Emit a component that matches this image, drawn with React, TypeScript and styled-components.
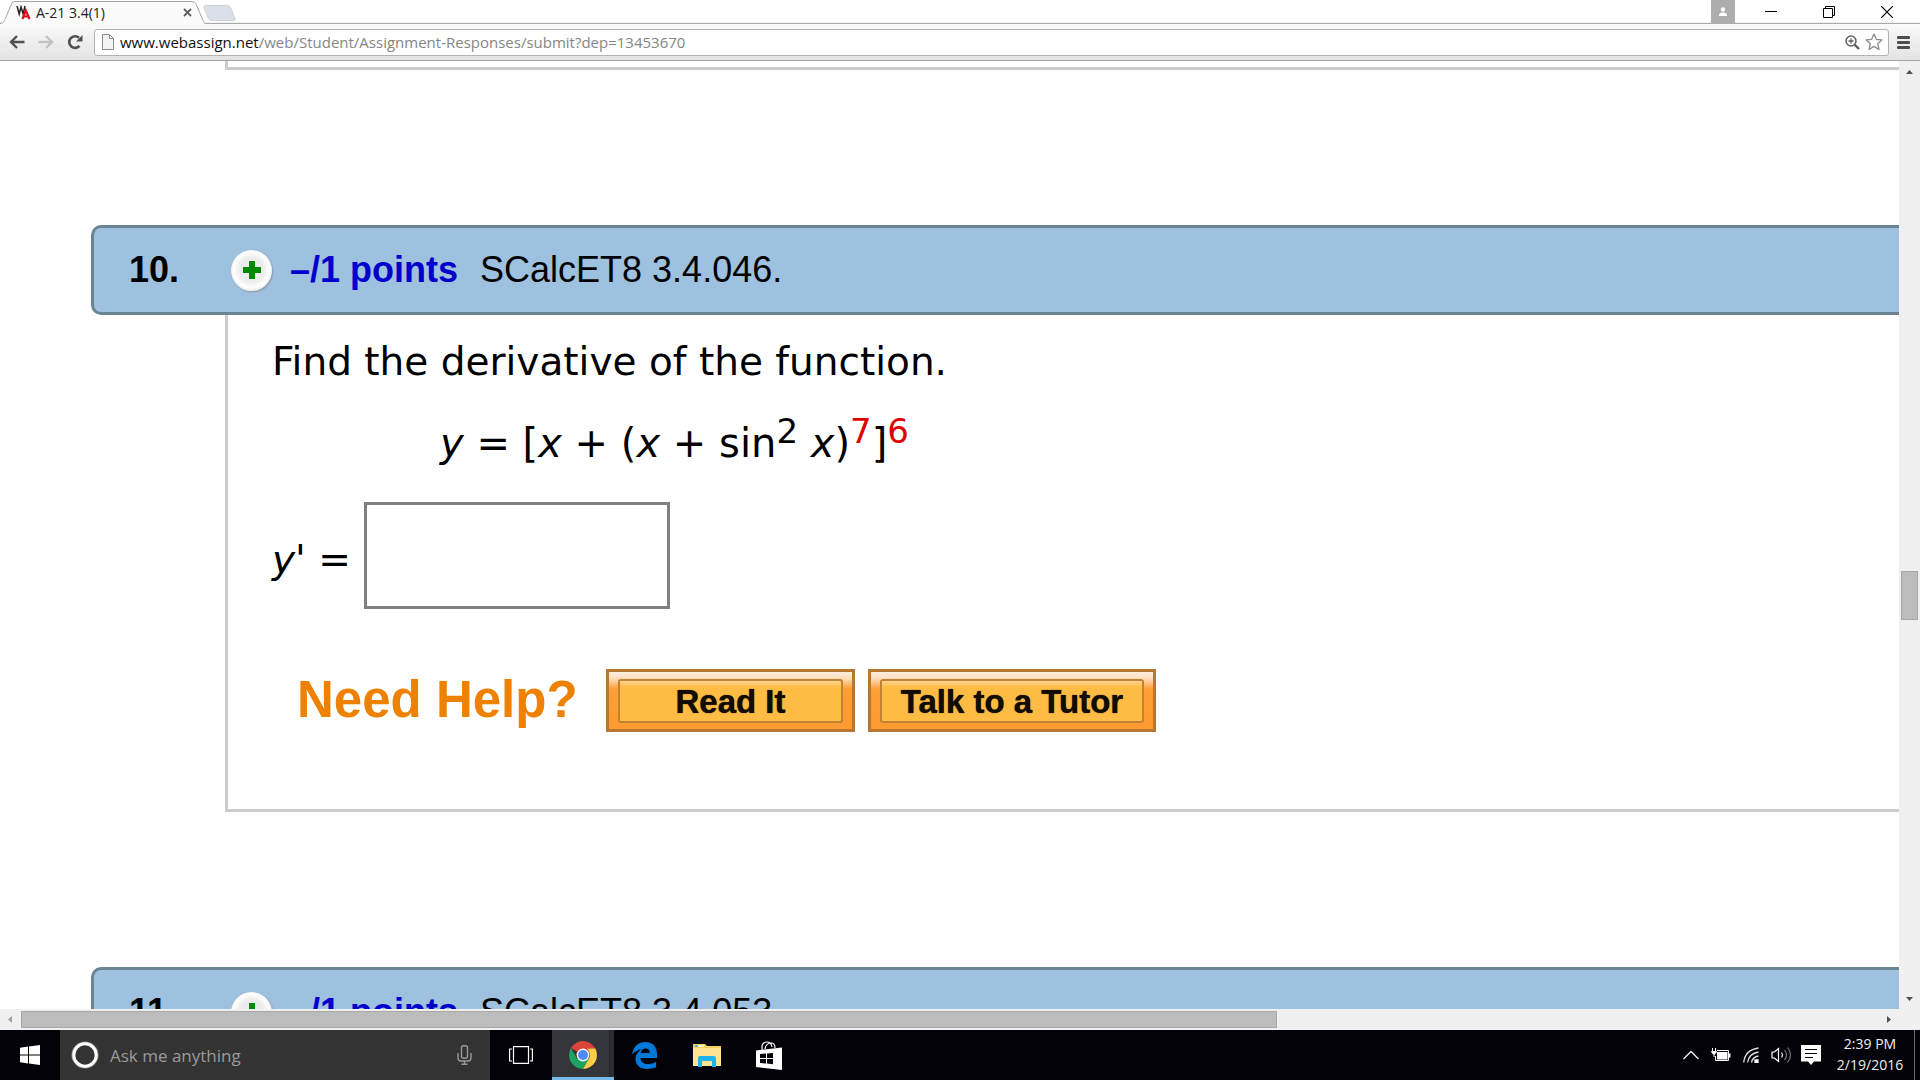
import React from "react";
import styled, { createGlobalStyle } from "styled-components";

const ui = '"Open Sans", "Noto Sans", sans-serif';
const arial = '"Liberation Sans", Arial, sans-serif';
const verdana = 'Verdana, "DejaVu Sans", sans-serif';

const Global = createGlobalStyle`
  * { box-sizing: border-box; }
  html, body { margin: 0; padding: 0; overflow: hidden; }
  button { margin: 0; padding: 0; border: 0; background: none; font: inherit; color: inherit; }
  svg { display: block; flex: none; }
`;

const Screen = styled.div`
  display: flex;
  flex-direction: column;
  height: 100vh;
  background: #fff;
  font-family: ${ui};
`;

/* Browser chrome */
const TabStrip = styled.header`
  display: flex;
  height: 24px;
  background: linear-gradient(#fff 22px, #e4e4e4 23px, #a9a9a9 23px);
`;
const Tab = styled.div`
  display: grid;
  width: 206px;
  height: 24px;
  > * { grid-area: 1 / 1; }
`;
const TabContent = styled.div`
  display: flex;
  align-items: center;
  gap: 5px;
  padding: 1px 14px 0 16px;
  font-size: 14px;
  line-height: 20px;
  color: #222;
`;
const TabTitle = styled.span`
  flex: 1;
  white-space: nowrap;
`;
const NewTab = styled.button`
  align-self: flex-start;
  margin: 5px 0 0 -4px;
`;
const WindowControls = styled.div`
  display: flex;
  margin-left: auto;
  padding-right: 4px;
`;
const Profile = styled.button`
  display: grid;
  place-items: center;
  width: 24px;
  height: 24px;
  margin-right: 7px;
  background: #adadad;
`;
const WindowButton = styled.button`
  display: grid;
  place-items: center;
  width: 58px;
  height: 24px;
`;
const Toolbar = styled.nav`
  display: flex;
  align-items: center;
  height: 37px;
  padding: 0 2px;
  border-bottom: 1px solid #a6a6a6;
  background: linear-gradient(#fafafa, #e3e3e3);
`;
const ToolButton = styled.button`
  display: grid;
  place-items: center;
  width: 29px;
  height: 28px;
`;
const Omnibox = styled.div`
  display: flex;
  align-items: center;
  flex: 1;
  height: 27px;
  margin-left: 5px;
  padding: 0 3px 0 7px;
  border: 1px solid #b3b3b3;
  border-radius: 3px;
  background: #fff;
`;
const Address = styled.div`
  flex: 1;
  margin-left: 6px;
  font-size: 15px;
  line-height: 22px;
  white-space: nowrap;
  color: #858585;
  outline: none;
`;
const Host = styled.span`
  color: #111;
`;
const OmniButton = styled.button`
  display: grid;
  place-items: center;
  width: 22px;
  height: 24px;
`;

/* Viewport with its scroll bars */
const Viewport = styled.div`
  flex: 1;
  min-height: 0;
  display: grid;
  grid-template: minmax(0, 1fr) 21px / minmax(0, 1fr) 21px;
  background: #f0f0f0;
`;
const Page = styled.main`
  overflow: hidden;
  padding-left: 91px;
  background: #fff;
`;
const ScrollBar = styled.div<{ $vertical?: boolean }>`
  display: flex;
  flex-direction: ${(p) => (p.$vertical ? "column" : "row")};
`;
const ScrollArrow = styled.button`
  display: grid;
  place-items: center;
  flex: none;
  width: 21px;
  height: 21px;
`;
const Track = styled.div<{ $vertical?: boolean }>`
  flex: 1;
  display: grid;
  padding: ${(p) => (p.$vertical ? "0 2px" : "2px 0")};
  ${(p) =>
    p.$vertical
      ? "grid-template-rows: 489fr 49fr 368fr;"
      : "grid-template-columns: 0fr 1256fr 601fr;"}
`;
const Thumb = styled.div<{ $vertical?: boolean }>`
  ${(p) => (p.$vertical ? "grid-row: 2;" : "grid-column: 2;")}
  border: 1px solid #a8a8a8;
  background: #bcbcbc;
`;

/* Assignment */
const PreviousBody = styled.div`
  height: 9px;
  margin: 0 0 155px 134px;
  border: solid #ccc;
  border-width: 0 0 3px 3px;
`;
const Question = styled.section`
  margin-bottom: 155px;
`;
const QuestionHeader = styled.h2`
  display: flex;
  align-items: center;
  height: 90px;
  margin: 0;
  padding-left: 35px;
  border: 3px solid #6b8494;
  border-right: 0;
  border-radius: 10px 0 0 10px;
  background: #9dc1df;
  font: 400 36px/42px ${arial};
  color: #000;
  white-space: pre;
`;
const Number = styled.span`
  width: 102px;
  font-weight: 700;
`;
const Expand = styled.button`
  display: grid;
  place-items: center;
  width: 41px;
  height: 41px;
  margin-right: 18px;
  border-radius: 50%;
  background: radial-gradient(circle at 50% 48%, #ececec 40%, #fff 62%, #f1f1f1 68%);
  box-shadow: 1px 1px 2px #8796a2;
`;
const Points = styled.a`
  margin-right: 22px;
  font-weight: 700;
  color: #0000cd;
  text-decoration: none;
`;
const QuestionBody = styled.div`
  height: 497px;
  margin-left: 134px;
  padding: 24px 0 0 44px;
  border: solid #ccc;
  border-width: 0 0 3px 3px;
  font: 400 39px/46px ${verdana};
  color: #000;
`;
const Prompt = styled.p`
  margin: 0 0 35px;
  white-space: nowrap;
`;
const Equation = styled.p`
  margin: 0 0 36px;
  padding-left: 168px;
  font-size: 40px;
  white-space: nowrap;
`;
const Sup = styled.sup<{ $red?: boolean }>`
  font-size: 34px;
  line-height: 0;
  vertical-align: 14px;
  color: ${(p) => (p.$red ? "#e00000" : "inherit")};
`;
const AnswerRow = styled.div`
  display: flex;
  align-items: center;
  gap: 16px;
  margin-bottom: 60px;
`;
const AnswerLabel = styled.label`
  width: 76px;
  padding-top: 8px;
  white-space: nowrap;
`;
const AnswerInput = styled.input`
  width: 306px;
  height: 107px;
  padding: 0 12px;
  border: 3px solid #808080;
  border-radius: 0;
  background: #fff;
  font: inherit;
  outline: none;
`;
const HelpRow = styled.div`
  display: flex;
  align-items: center;
  gap: 13px;
  padding-left: 25px;
  font-family: ${arial};
  font-weight: 700;
`;
const HelpTitle = styled.strong`
  width: 296px;
  padding-bottom: 2px;
  font-size: 51px;
  line-height: 60px;
  color: #ee8100;
  white-space: nowrap;
`;
const HelpButton = styled.button<{ $wide?: boolean }>`
  width: ${(p) => (p.$wide ? 288 : 249)}px;
  height: 63px;
  padding: 0 9px;
  border: 3px solid #b87730;
  background: linear-gradient(#ffeedd, #ffdfc0 6px, #ff9f35 17px, #ff9b30);
  font-size: 33px;
  line-height: 36px;
  color: #120d00;
  text-shadow: 0 0 1px #120d00;
  white-space: nowrap;
`;
const HelpFace = styled.span`
  display: flex;
  align-items: center;
  justify-content: center;
  height: 44px;
  padding-top: 2px;
  border: 2px solid #c08333;
  border-radius: 3px;
  background: linear-gradient(#ffd593, #ffbc45 6px);
`;

/* Taskbar */
const Taskbar = styled.footer`
  display: flex;
  height: 50px;
  background: #020208;
  color: #fff;
`;
const Start = styled.button`
  display: grid;
  place-items: center;
  width: 60px;
`;
const Search = styled.div`
  display: flex;
  align-items: center;
  width: 430px;
  padding: 0 18px 0 11px;
  background: #333;
`;
const SearchInput = styled.input`
  flex: 1;
  min-width: 0;
  padding: 2px 0 0 11px;
  border: 0;
  background: none;
  font: 400 17px/24px ${ui};
  color: #fff;
  outline: none;
  &::placeholder { color: #9a9a9a; opacity: 1; }
`;
const TaskButton = styled.button<{ $active?: boolean }>`
  display: grid;
  place-items: center;
  width: 62px;
  border-bottom: 3px solid ${(p) => (p.$active ? "#76b9ed" : "transparent")};
  border-top: 3px solid transparent;
  background: ${(p) =>
    p.$active ? "linear-gradient(90deg, #35363b 57px, #1e1f25 57px, #2c2d33 58px) border-box" : "none"};
`;
const Tray = styled.div`
  display: flex;
  align-items: center;
  margin-left: auto;
`;
const TrayButton = styled.button`
  display: grid;
  place-items: center;
  width: 30px;
  height: 50px;
`;
const Clock = styled.time`
  width: 88px;
  padding-bottom: 2px;
  font-size: 14px;
  line-height: 21px;
  text-align: center;
  color: #eee;
`;
const ShowDesktop = styled.button`
  width: 6px;
  height: 50px;
  border-left: 1px solid #66666b;
`;

const Arrow = ({ d, color = "#505050" }: { d: string; color?: string }) => (
  <svg width="9" height="9" viewBox="0 0 9 9"><path d={d} fill={color} /></svg>
);

function Header({ number, code }: { number: string; code: string }) {
  return (
    <QuestionHeader>
      <Number>{number}</Number>
      <Expand aria-label="Expand question">
        <svg width="20" height="20" viewBox="0 0 20 20">
          <path d="M7 1h6v6h6v6h-6v6H7v-6H1V7h6z" fill="#008a00" />
        </svg>
      </Expand>
      <Points href="#points">–/1 points</Points>
      <span>{code}</span>
    </QuestionHeader>
  );
}

function BrowserBar() {
  return (
    <>
      <TabStrip>
        <Tab>
          <svg width="206" height="24" viewBox="0 0 206 24">
            <path d="M0 24C4 23 4 21 6 17L11 5C12 2 13 1.500 16 1.500H190C194 1.500 195 2 196.500 5L202 18C204 22 204 23.500 206 24z" fill="#fbfbfb" />
            <path d="M0 23.500C4 23 4 21 6 17L11 5C12 2 13 1.500 16 1.500H190C194 1.500 195 2 196.500 5L202 18C204 22 204 23.500 206 23.500" fill="none" stroke="#a3a3a3" />
          </svg>
          <TabContent>
            <svg width="15" height="15" viewBox="0 0 15 15" fill="none">
              <path d="M1 1l2.200 8L5 2l2.200 7L9 1" stroke="#222" strokeWidth="1.500" />
              <path d="M6.500 14l3.300-8.500L13.500 14M8 11.500h4.500" stroke="#d8101a" strokeWidth="2.200" />
            </svg>
            <TabTitle>A-21 3.4(1)</TabTitle>
            <button aria-label="Close tab">
              <svg width="9" height="9" viewBox="0 0 9 9"><path d="M1 1l7 7M8 1L1 8" stroke="#606060" strokeWidth="1.800" /></svg>
            </button>
          </TabContent>
        </Tab>
        <NewTab aria-label="New tab">
          <svg width="34" height="17" viewBox="0 0 34 17">
            <path d="M4 .5h21q3 0 4 3l4 10q1 2-2 2H10q-3 0-4-3L2 3Q1 .5 4 .5z" fill="#dbe0e8" stroke="#cdd1d8" />
          </svg>
        </NewTab>
        <WindowControls>
          <Profile aria-label="Profile">
            <svg width="10" height="10" viewBox="0 0 10 10" fill="#fff"><circle cx="5" cy="2.500" r="2.200" /><path d="M1 9V8q0-2.500 4-2.500T9 8v1z" /></svg>
          </Profile>
          <WindowButton aria-label="Minimize">
            <svg width="12" height="12" viewBox="0 0 12 12"><path d="M0 5.500h12" stroke="#000" /></svg>
          </WindowButton>
          <WindowButton aria-label="Restore">
            <svg width="12" height="12" viewBox="0 0 12 12" fill="none" stroke="#000"><path d="M.5 2.500h9v9h-9zM2.500 2.500v-2h9v9h-2" /></svg>
          </WindowButton>
          <WindowButton aria-label="Close">
            <svg width="12" height="12" viewBox="0 0 12 12"><path d="M0 0l12 12M12 0L0 12" stroke="#000" strokeWidth="1.200" /></svg>
          </WindowButton>
        </WindowControls>
      </TabStrip>
      <Toolbar>
        <ToolButton aria-label="Back">
          <svg width="16" height="14" viewBox="0 0 16 14" fill="none" stroke="#505050" strokeWidth="2.400"><path d="M15.500 7H2M8 1L2 7l6 6" /></svg>
        </ToolButton>
        <ToolButton aria-label="Forward">
          <svg width="16" height="14" viewBox="0 0 16 14" fill="none" stroke="#c2c2c2" strokeWidth="2.400"><path d="M.5 7H14M8 1l6 6-6 6" /></svg>
        </ToolButton>
        <ToolButton aria-label="Reload">
          <svg width="16" height="16" viewBox="0 0 16 16"><path d="M12.500 11.800A5.800 5.800 0 1 1 12 3.800" fill="none" stroke="#505050" strokeWidth="2.600" /><path d="M15.500 1v6.500H9z" fill="#505050" /></svg>
        </ToolButton>
        <Omnibox>
          <svg width="12" height="16" viewBox="0 0 12 16" fill="#f3f3f3" stroke="#8b8b8b"><path d="M.5.5h7l4 4v11H.5zM7.500.5v4h4" /></svg>
          <Address role="textbox" aria-label="Address" contentEditable suppressContentEditableWarning spellCheck={false}>
            <Host>www.webassign.net</Host>/web/Student/Assignment-Responses/submit?dep=13453670
          </Address>
          <OmniButton aria-label="Zoom">
            <svg width="15" height="15" viewBox="0 0 15 15" fill="none" stroke="#5f5f5f"><circle cx="6" cy="6" r="5" strokeWidth="1.500" /><path d="M3.500 6h5M6 3.500v5" strokeWidth="1.300" /><path d="M9.800 9.800L14 14" strokeWidth="2.400" /></svg>
          </OmniButton>
          <OmniButton aria-label="Bookmark">
            <svg width="18" height="18" viewBox="0 0 18 18" fill="none" stroke="#8a8a8a" strokeWidth="1.300" strokeLinejoin="round"><path d="M9 1l2.300 5.300 5.700.5-4.300 3.900 1.300 5.800L9 13.400l-5 3.100 1.300-5.800L1 6.800l5.700-.5z" /></svg>
          </OmniButton>
        </Omnibox>
        <ToolButton aria-label="Menu">
          <svg width="13" height="13" viewBox="0 0 13 13"><path d="M1 1.500h11M1 6.500h11M1 11.500h11" stroke="#4d4d4d" strokeWidth="2.800" strokeLinecap="round" /></svg>
        </ToolButton>
      </Toolbar>
    </>
  );
}

function WindowsTaskbar() {
  return (
    <Taskbar>
      <Start aria-label="Start">
        <svg width="20" height="20" viewBox="0 0 20 20" fill="#fff"><path d="M0 2.800L8 1.600v7.900H0zM9 1.500L20 0v9.500H9zM0 10.500h8v7.900L0 17.200zM9 10.500h11V20L9 18.500z" /></svg>
      </Start>
      <Search>
        <svg width="28" height="28" viewBox="0 0 28 28" fill="none"><circle cx="14" cy="14" r="12.800" stroke="#8e8e8e" strokeWidth="1.500" /><circle cx="14" cy="14" r="11.200" stroke="#fff" strokeWidth="3" /></svg>
        <SearchInput aria-label="Search" placeholder="Ask me anything" />
        <svg width="15" height="20" viewBox="0 0 15 20" fill="none" stroke="#999" strokeWidth="1.400"><rect x="4.500" y=".7" width="6" height="12.500" rx="2" /><path d="M1 8v5q0 3 3 3h7q3 0 3-3V8M7.500 16v3.500M4.500 19.300h6" /></svg>
      </Search>
      <TaskButton aria-label="Task view">
        <svg width="24" height="18" viewBox="0 0 24 18" fill="none" stroke="#fff" strokeWidth="1.200"><path d="M4.500.6h15v16.800h-15zM3 3H.6v12H3M21 3h2.400v12H21" /></svg>
      </TaskButton>
      <TaskButton $active aria-label="Chrome">
        <svg width="28" height="28" viewBox="0 0 28 28">
          <path d="M14 14L1.900 7A14 14 0 0 1 26.100 7z" fill="#db4437" />
          <path d="M1.900 7A14 14 0 0 0 14 28l6-10.500L14 14 8 17.500z" fill="#1da462" />
          <path d="M26.100 7A14 14 0 0 1 14 28l6-10.500q2.500-6-2-10z" fill="#ffcd46" />
          <path d="M14 7.500h12.300L26.100 7 14 5z" fill="#db4437" />
          <circle cx="14" cy="14" r="6.400" fill="#f4f4f4" /><circle cx="14" cy="14" r="5" fill="#4c8bf5" />
        </svg>
      </TaskButton>
      <TaskButton aria-label="Edge">
        <svg width="26" height="27" viewBox="0 0 26 27">
          <path d="M0 12.500C1 4.500 6.500 0 13.500 0 21 0 25 5.500 25 12v4H8.500c.3 4 3.500 6 7.800 6 2.800 0 5.500-.8 7.800-2.200v5.500C21.500 26.500 18.500 27 15 27 8 27 3.500 23 3.500 17c0-4.500 2.500-8 6.500-9.800C6 7.500 2.500 9.500 0 12.500zM8.700 11h9c0-3-1.300-4.600-4-4.600-2.800 0-4.500 1.800-5 4.600z" fill="#0078d7" />
        </svg>
      </TaskButton>
      <TaskButton aria-label="File Explorer">
        <svg width="28" height="23" viewBox="0 0 28 23"><path d="M0 0h12l2 2h14v20H0z" fill="#f3cf62" /><path d="M0 4h28v18H0z" fill="#ffe592" /><path d="M2 1.200h9v1.600H2z" fill="#fff6d8" /><path d="M2 1.200h3v1.600H2z" fill="#1ea7e8" /><path d="M5 23V14q0-2 2-2h14q2 0 2 2v9h-4v-6H9v6z" fill="#1fb4ee" /></svg>
      </TaskButton>
      <TaskButton aria-label="Store">
        <svg width="26" height="29" viewBox="0 0 26 29"><path d="M6 9V5q1-4 5-4t5 5M9 8q1-6 6-6 4 0 4 5" fill="none" stroke="#fff" strokeWidth="1.200" /><path d="M0 9.500L26 6.500V29L0 26z" fill="#fff" /><path d="M4 13l6-.5V17H4zM11 12.400l6-.5V17h-6zM4 18h6v4.500L4 22zM11 18h6v5.200l-6-.6z" fill="#020208" /></svg>
      </TaskButton>
      <Tray>
        <TrayButton aria-label="Show hidden icons">
          <svg width="16" height="10" viewBox="0 0 16 10" fill="none" stroke="#eee" strokeWidth="1.400"><path d="M.5 9L8 1.500 15.500 9" /></svg>
        </TrayButton>
        <TrayButton aria-label="Battery">
          <svg width="20" height="14" viewBox="0 0 20 14">
            <path d="M4.500 2.500h13v10h-13z" fill="none" stroke="#fff" />
            <path d="M6 4h10.500v7.500H6zM18 5.500h1.500v4H18z" fill="#fff" />
            <path d="M0 1h6v7H0z" fill="#020208" />
            <path d="M1.500 0v3M4.500 0v3M.5 3.500h5M3 5v4" fill="none" stroke="#fff" />
            <path d="M.5 3h5v1.500L4 6.500H2L.5 4.500z" fill="#fff" />
          </svg>
        </TrayButton>
        <TrayButton aria-label="Wi-Fi">
          <svg width="16" height="16" viewBox="0 0 16 16" fill="none" stroke="#ddd" strokeWidth="1.300"><path d="M.7 15.500Q2 3 15.500 1M4.500 15.500Q6 6.500 15.500 5M8.500 15.500Q9.500 10 15.500 9" /><path d="M12 13h3v2.500h-3z" fill="#fff" stroke="#fff" /></svg>
        </TrayButton>
        <TrayButton aria-label="Volume">
          <svg width="21" height="18" viewBox="0 0 21 18" fill="none"><path d="M1 6h2.500L7.500 2.500v13L3.500 12H1z" stroke="#fff" strokeWidth="1.200" /><path d="M10.500 6.500q2 2.500 0 5" stroke="#ddd" strokeWidth="1.200" /><path d="M13.500 4q4 5 0 10M16.500 1.500q6 7.500 0 15" stroke="#77777b" strokeWidth="1.200" /></svg>
        </TrayButton>
        <TrayButton aria-label="Notifications">
          <svg width="20" height="20" viewBox="0 0 20 20"><path d="M0 0h20v16.500h-7L10 20l-3-3.500H0z" fill="#fff" /><path d="M4 4.500h12M4 8.500h12M4 12.500h8" stroke="#020208" /></svg>
        </TrayButton>
        <Clock>2:39 PM<br />2/19/2016</Clock>
        <ShowDesktop aria-label="Show desktop" />
      </Tray>
    </Taskbar>
  );
}

export default function App() {
  return (
    <Screen>
      <Global />
      <BrowserBar />
      <Viewport>
        <Page>
          <PreviousBody />
          <Question>
            <Header number="10." code="SCalcET8 3.4.046." />
            <QuestionBody>
              <Prompt>Find the derivative of the function.</Prompt>
              <Equation>
                <var>y</var> = [<var>x</var> + (<var>x</var> + sin<Sup>2</Sup> <var>x</var>)<Sup $red>7</Sup>]<Sup $red>6</Sup>
              </Equation>
              <AnswerRow>
                <AnswerLabel htmlFor="answer"><var>y'</var> =</AnswerLabel>
                <AnswerInput id="answer" type="text" />
              </AnswerRow>
              <HelpRow>
                <HelpTitle>Need Help?</HelpTitle>
                <HelpButton><HelpFace>Read It</HelpFace></HelpButton>
                <HelpButton $wide><HelpFace>Talk to a Tutor</HelpFace></HelpButton>
              </HelpRow>
            </QuestionBody>
          </Question>
          <Question>
            <Header number="11." code="SCalcET8 3.4.053." />
          </Question>
        </Page>
        <ScrollBar $vertical>
          <ScrollArrow aria-label="Scroll up"><Arrow d="M1 7h7L4.500 3z" /></ScrollArrow>
          <Track $vertical><Thumb $vertical /></Track>
          <ScrollArrow aria-label="Scroll down"><Arrow d="M1 3h7L4.500 7z" /></ScrollArrow>
        </ScrollBar>
        <ScrollBar>
          <ScrollArrow aria-label="Scroll left"><Arrow d="M6 1v7L2 4.500z" color="#a0a0a0" /></ScrollArrow>
          <Track><Thumb /></Track>
          <ScrollArrow aria-label="Scroll right"><Arrow d="M3 1v7l4-3.500z" /></ScrollArrow>
        </ScrollBar>
      </Viewport>
      <WindowsTaskbar />
    </Screen>
  );
}
